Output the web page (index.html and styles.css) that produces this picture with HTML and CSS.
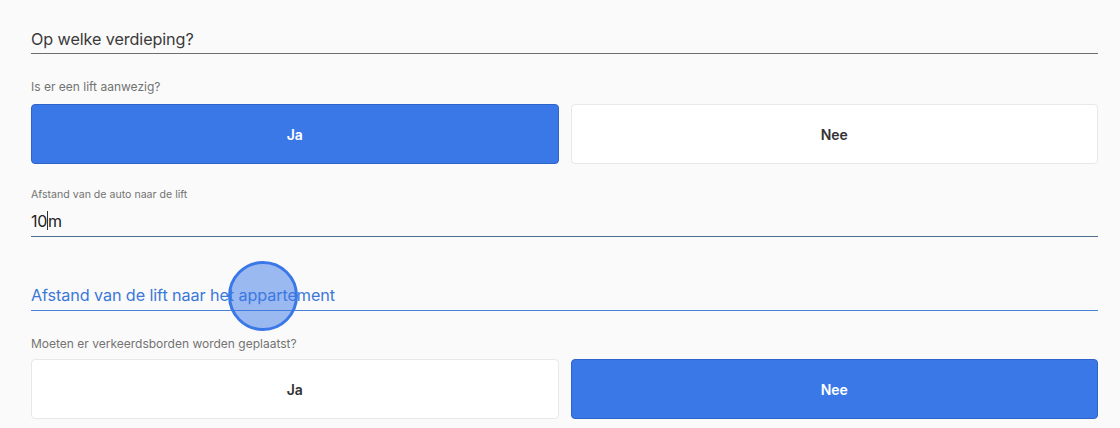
FILE: index.html
```html
<!DOCTYPE html>
<html lang="nl">
<head>
<meta charset="utf-8">
<link rel="stylesheet" href="styles.css">
</head>
<body>
<div class="form">
  <div class="title-field">Op welke verdieping?</div>

  <div class="label first">Is er een lift aanwezig?</div>
  <div class="choice">
    <div class="opt active">Ja</div>
    <div class="opt">Nee</div>
  </div>

  <div class="label small">Afstand van de auto naar de lift</div>
  <div class="value-field">10<span class="caret"></span>m</div>

  <div class="title-field focus">Afstand van de lift naar het appartement</div>

  <div class="label third">Moeten er verkeerdsborden worden geplaatst?</div>
  <div class="choice">
    <div class="opt">Ja</div>
    <div class="opt active">Nee</div>
  </div>
</div>
<div class="click"></div>
</body>
</html>
```

FILE: styles.css
```css
html, body {
  margin: 0;
  padding: 0;
  background: #fafafa;
  font-family: Inter, "Liberation Sans", sans-serif;
  color: #333;
}
.form {
  padding: 0 22px 0 31px;
}
.title-field {
  padding-top: 28px;
  font-size: 16.2px;
  line-height: 22px;
  padding-bottom: 3px;
  border-bottom: 1px solid #6e6e6e;
  color: #3a3a3a;
  letter-spacing: -0.1px;
}
.title-field.focus {
  margin-top: 47px;
  padding-top: 0;
  padding-bottom: 4px;
  color: #3b78d8;
  border-bottom-color: #4a7fd6;
}
.label {
  font-size: 12px;
  line-height: 14px;
  color: #737373;
}
.label.first {
  margin-top: 26px;
  margin-bottom: 10px;
}
.label.small {
  margin-top: 24px;
  font-size: 10.6px;
}
.label.third {
  margin-top: 26px;
  margin-bottom: 8px;
}
.choice {
  display: grid;
  grid-template-columns: 1fr 1fr;
  gap: 12px;
}
.opt {
  height: 58px;
  border: 1px solid #e8e8e8;
  border-radius: 4px;
  background: #fff;
  display: flex;
  align-items: center;
  justify-content: center;
  font-size: 14px;
  font-weight: 600;
  color: #333;
}
.opt.active {
  background: #3b78e7;
  border-color: #2e64c9;
  color: #fff;
}
.value-field {
  margin-top: 8px;
  font-size: 16px;
  line-height: 22px;
  padding-bottom: 4px;
  border-bottom: 1px solid #4f6e92;
  color: #222;
  letter-spacing: -0.3px;
}
.caret {
  display: inline-block;
  width: 1px;
  height: 19px;
  background: #333;
  vertical-align: -3px;
}
.click {
  position: absolute;
  left: 228px;
  top: 261px;
  width: 64px;
  height: 64px;
  border-radius: 50%;
  border: 3px solid #3b78e7;
  background: rgba(59, 120, 231, 0.5);
}
```
